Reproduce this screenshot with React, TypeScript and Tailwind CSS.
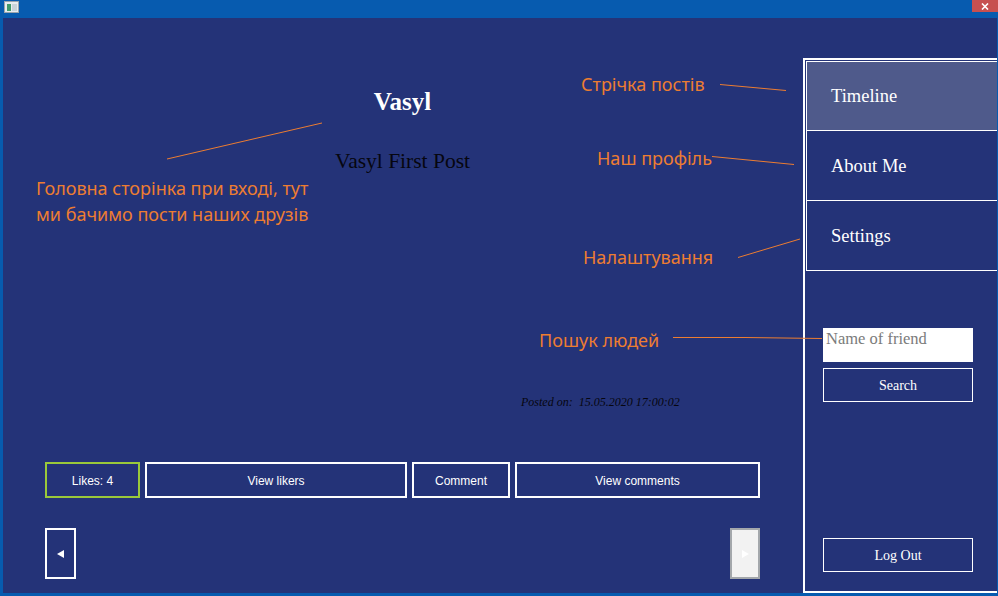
const serif = "font-['Liberation_Serif',serif]";
const sans = "font-['Liberation_Sans',Arial,sans-serif]";
const note = "absolute whitespace-nowrap text-[#ed7d31] font-['Noto_Sans',sans-serif] text-[18px] leading-[26px]";

const SideItem = ({ label, active, first }: { label: string; active?: boolean; first?: boolean }) => (
  <div
    className={`h-[70px] flex items-center pl-[24px] pt-[2px] border-l border-b border-white ${first ? "border-t" : ""} ${
      active ? "bg-[#4f5a8b]" : ""
    }`}
  >
    <span className={`${serif} text-[18.5px] text-white`}>{label}</span>
  </div>
);

const Btn = ({ label, w, green }: { label: string; w: string; green?: boolean }) => (
  <button
    className={`${w} h-[36px] border-2 ${green ? "border-[#9ac93a]" : "border-white"} ${sans} text-[12px] text-white flex items-center justify-center pt-[1px]`}
  >
    {label}
  </button>
);

export default function App() {
  return (
    <div className="relative w-[998px] h-[596px] bg-[#075baf] overflow-hidden">
      {/* title bar */}
      <div className="h-[17px] flex items-start justify-between">
        <svg width="16" height="12" viewBox="0 0 16 12" className="ml-[4px] mt-[1px]">
          <rect x="0.5" y="0.5" width="14" height="11" fill="#e8ecef" stroke="#9aa4ad" />
          <rect x="3" y="3" width="4" height="7" fill="#3f9a6a" />
          <rect x="8" y="3" width="5" height="7" fill="#c9d3da" />
        </svg>
        <div className="w-[26px] h-[12px] bg-[#c75050] flex items-center justify-center">
          <svg width="8" height="7" viewBox="0 0 8 7">
            <path d="M1 0.5 L7 6.5 M7 0.5 L1 6.5" stroke="white" strokeWidth="1.6" />
          </svg>
        </div>
      </div>

      {/* window body */}
      <div className="ml-[3px] mr-[1px] mt-[1px] h-[575px] bg-[#243378] flex">
        <div className="w-[800px] pl-[42px] flex flex-col">
          <div className="w-[715px] flex flex-col items-center mt-[69px]">
            <div className={`${serif} font-bold text-[25px] leading-[30px] text-white`}>Vasyl</div>
            <div className={`${serif} text-[21.5px] leading-[28px] text-[#06060f] mt-[30px]`}>Vasyl First Post</div>
          </div>
          <div className={`${serif} italic text-[12px] leading-[16px] text-[#06060f] ml-[476px] mt-[219px] whitespace-pre`}>
            Posted on:  15.05.2020 17:00:02
          </div>
          <div className="flex gap-[5px] mt-[52px]">
            <Btn label="Likes: 4" w="w-[95px]" green />
            <Btn label="View likers" w="w-[262px]" />
            <Btn label="Comment" w="w-[98px]" />
            <Btn label="View comments" w="w-[245px]" />
          </div>
          <div className="w-[715px] flex justify-between mt-[30px]">
            <button className="w-[31px] h-[51px] border-2 border-white flex items-center justify-center">
              <svg width="7" height="8" viewBox="0 0 7 8">
                <path d="M0 4 L7 0 L7 8 Z" fill="white" />
              </svg>
            </button>
            <button className="w-[30px] h-[51px] border-2 border-[#a3a7ab] bg-[#f2f2f2] flex items-center justify-center">
              <svg width="7" height="8" viewBox="0 0 7 8">
                <path d="M7 4 L0 0 L0 8 Z" fill="white" />
              </svg>
            </button>
          </div>
        </div>

        {/* sidebar */}
        <div className="w-[194px] mt-[40px] border-l-2 border-t-2 border-b-2 border-white pl-[1px] pt-[1px] flex flex-col">
          <SideItem label="Timeline" active first />
          <SideItem label="About Me" />
          <SideItem label="Settings" />
          <div className="pl-[17px] mt-[57px] flex flex-col gap-[6px]">
            <input
              placeholder="Name of friend"
              className={`w-[150px] h-[34px] bg-white px-[3px] pb-[12px] ${serif} text-[16.5px] text-black placeholder:text-[#7b7b7b] outline-none`}
            />
            <button className={`w-[150px] h-[34px] border border-white ${serif} text-[14px] text-white`}>Search</button>
          </div>
          <div className="pl-[17px] mt-auto mb-[19px]">
            <button className={`w-[150px] h-[34px] border border-white ${serif} text-[14px] text-white`}>Log Out</button>
          </div>
        </div>
      </div>

      {/* annotations */}
      <svg className="absolute left-0 top-0 pointer-events-none" width="998" height="596">
        <g stroke="#ed7d31" strokeWidth="1" fill="none">
          <line x1="167" y1="159" x2="322" y2="123" />
          <line x1="720" y1="84.5" x2="786" y2="90.5" />
          <line x1="712" y1="156.5" x2="794" y2="164.5" />
          <line x1="738" y1="257.5" x2="800" y2="239" />
          <polyline points="673,337.5 745,337.5 822,338.5" />
        </g>
      </svg>
      <div className={`${note} left-[581px] top-[71px]`}>Стрічка постів</div>
      <div className={`${note} left-[597px] top-[145px]`}>Наш профіль</div>
      <div className={`${note} left-[583px] top-[244px]`}>Налаштування</div>
      <div className={`${note} left-[539px] top-[327px]`}>Пошук людей</div>
      <div className={`${note} left-[36px] top-[175px]`}>
        Головна сторінка при вході, тут
        <br />
        ми бачимо пости наших друзів
      </div>
    </div>
  );
}
